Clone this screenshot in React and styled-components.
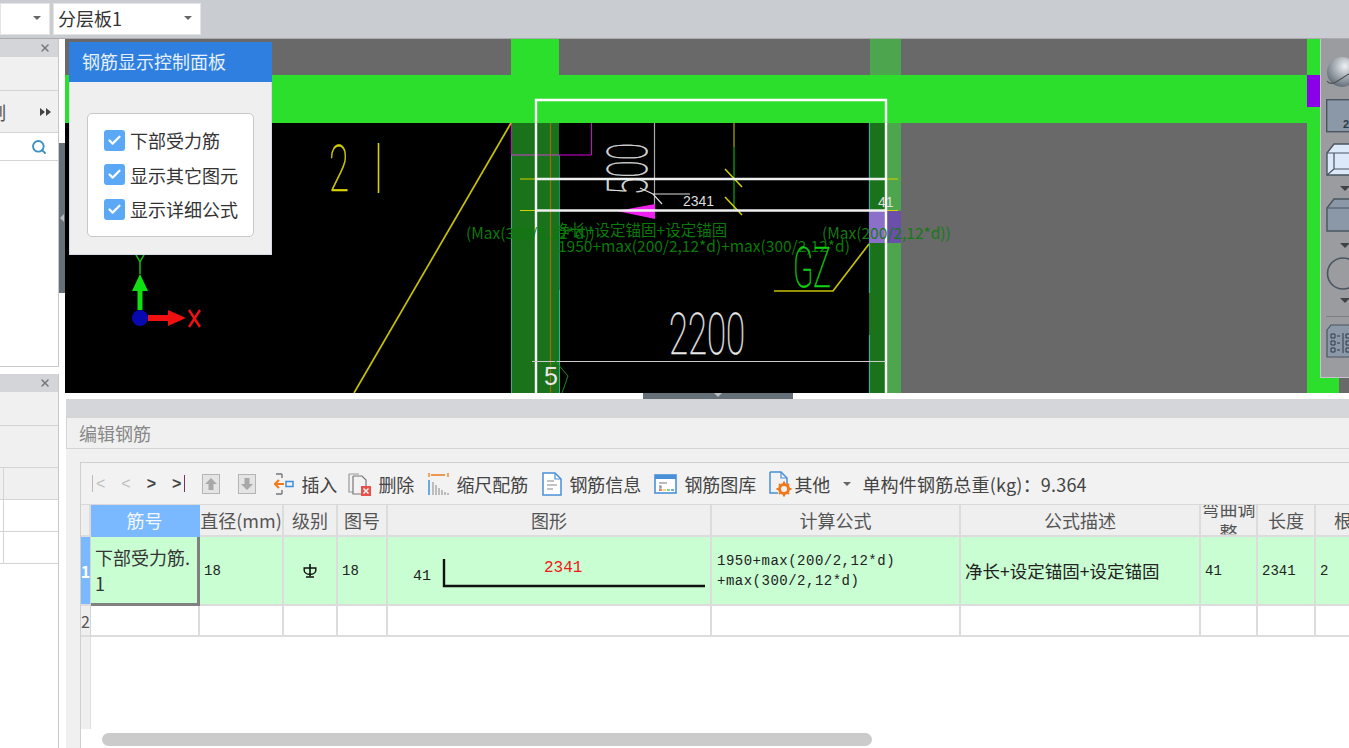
import React from 'react';
import styled, { createGlobalStyle } from 'styled-components';
import { Check, Search, X } from 'lucide-react';

const CJK = `"Noto Sans CJK SC", "Liberation Sans", sans-serif`;
const MONO = `"Liberation Mono", "Noto Sans CJK SC", monospace`;

const GlobalStyle = createGlobalStyle`
  html, body {
    margin: 0;
    padding: 0;
    overflow: hidden;
    background: #ffffff;
  }
  * { box-sizing: border-box; }
`;

const Page = styled.div`
  width: 1349px;
  height: 748px;
  display: flex;
  flex-direction: column;
  overflow: hidden;
  font-family: ${CJK};
  font-size: 18px;
  line-height: 24px;
  color: #333;
  filter: blur(0.4px);
`;

/* ---- top bar ---- */
const TopBar = styled.div`
  height: 39px;
  flex: none;
  display: flex;
  gap: 3px;
  padding-top: 3px;
  background: #c9ccd1;
  border-bottom: 1px solid #a9abae;
`;

const Select = styled.div`
  width: ${(p) => p.$w}px;
  height: 32px;
  display: flex;
  align-items: center;
  justify-content: space-between;
  padding: 0 8px 2px 4px;
  background: #fff;
  border: 1px solid #e4e4e4;
`;

const Caret = styled.span`
  width: 0;
  height: 0;
  flex: none;
  border-left: 4px solid transparent;
  border-right: 4px solid transparent;
  border-top: 4px solid ${(p) => p.$color || '#666'};
`;

const Main = styled.div`
  flex: 1;
  display: flex;
  min-height: 0;
`;

/* ---- left column ---- */
const LeftCol = styled.div`
  width: 59px;
  flex: none;
  display: flex;
  flex-direction: column;
  gap: 7px;
`;

const SidePanel = styled.div`
  height: ${(p) => (p.$grow ? 'auto' : `${p.$h}px`)};
  flex: ${(p) => (p.$grow ? 1 : 'none')};
  display: flex;
  flex-direction: column;
  background: #fff;
  border-right: 1px solid #c8c8c8;
  border-bottom: ${(p) => (p.$grow ? 'none' : '1px solid #c8c8c8')};
  overflow: hidden;
`;

const SideHeader = styled.div`
  height: 18px;
  flex: none;
  display: flex;
  align-items: center;
  justify-content: flex-end;
  padding-right: 7px;
  background: #d3d5d9;
  color: #777;
`;

const SideRow = styled.div`
  height: ${(p) => p.$h}px;
  flex: none;
  display: flex;
  align-items: center;
  justify-content: space-between;
  padding-right: ${(p) => p.$pr || 0}px;
  background: ${(p) => p.$bg || '#f0f0f0'};
  border-bottom: 1px solid #d4d4d4;
`;

const CutLabel = styled.span`
  margin-left: -12px;
  color: #555;
`;

const StubCell = styled.div`
  width: 4px;
  height: 100%;
  border-right: 1px solid #d4d4d4;
`;

const Splitter = styled.div`
  width: 6px;
  flex: none;
  display: flex;
  flex-direction: column;
  background: #fff;
`;

const SplitHandle = styled.div`
  margin-top: 104px;
  height: 150px;
  display: flex;
  align-items: center;
  justify-content: center;
  background: #667079;
`;

const SplitArrow = styled.span`
  width: 0;
  height: 0;
  border-top: 4px solid transparent;
  border-bottom: 4px solid transparent;
  border-right: 4px solid #b8bdc2;
`;

/* ---- right part ---- */
const Work = styled.div`
  flex: 1;
  min-width: 0;
  display: flex;
  flex-direction: column;
`;

const Canvas = styled.div`
  position: relative;
  height: 354px;
  flex: none;
  background: #000;
  overflow: hidden;
`;

const CadSvg = styled.svg`
  display: block;
`;

const ControlPanel = styled.div`
  position: absolute;
  left: 4px;
  top: 3px;
  width: 203px;
  height: 213px;
  display: flex;
  flex-direction: column;
  background: #efefef;
  border: 1px solid #d5dbe6;
  border-top: none;
`;

const ControlTitle = styled.div`
  height: 40px;
  flex: none;
  display: flex;
  align-items: center;
  padding: 0 0 2px 13px;
  margin: 0 -1px;
  background: #2e7fe0;
  color: #e6f0fb;
`;

const ControlBody = styled.div`
  margin: 31px 17px 0 17px;
  height: 124px;
  display: flex;
  flex-direction: column;
  gap: 12.5px;
  padding: 15px 0 0 16px;
  background: #fff;
  border: 1px solid #c8c8c8;
  border-radius: 5px;
`;

const CheckRow = styled.label`
  display: flex;
  align-items: center;
  gap: 5px;
  height: 22px;
  color: #333;
`;

const CheckBox = styled.span`
  width: 21px;
  height: 21px;
  flex: none;
  display: flex;
  align-items: center;
  justify-content: center;
  background: #5aa8f6;
  border-radius: 3px;
  color: #fff;
`;

const Rail = styled.div`
  position: absolute;
  right: 0;
  top: 0;
  width: 29px;
  height: 339px;
  display: flex;
  flex-direction: column;
  align-items: flex-start;
  padding: 18px 0 0 5px;
  background: #9a9c9f;
  border-left: 1px solid #c4c6c8;
  border-bottom: 1px solid #c4c6c8;
  overflow: hidden;
`;

const RailIcon = styled.svg`
  flex: none;
  display: block;
  margin-top: ${(p) => p.$mt || 0}px;
`;

const RailCaret = styled(Caret)`
  margin: ${(p) => p.$mt}px 0 0 14px;
  border-left-width: 5px;
  border-right-width: 5px;
  border-top-width: 5px;
`;

const RailLine = styled.div`
  width: 40px;
  height: 1px;
  margin-top: 13px;
  background: #7d7f82;
`;

const HandleRow = styled.div`
  height: 6px;
  flex: none;
  display: flex;
  justify-content: center;
  padding-left: 22px;
  background: #fff;
`;

const Handle = styled.div`
  width: 150px;
  height: 6px;
  display: flex;
  justify-content: center;
  background: #667079;
`;

const HandleArrow = styled(Caret)`
  border-top-color: #b8bdc2;
`;

/* ---- edit panel ---- */
const EditPanel = styled.div`
  flex: 1;
  min-height: 0;
  margin-left: 1px;
  display: flex;
  flex-direction: column;
  background: #f0f0f0;
`;

const EditHeader = styled.div`
  height: 18px;
  flex: none;
  background: #d4d6da;
`;

const EditTitle = styled.div`
  height: 32px;
  flex: none;
  display: flex;
  align-items: center;
  padding-left: 12px;
  color: #888;
  border: 1px solid #d4d4d4;
  border-right: none;
`;

const EditBox = styled.div`
  flex: 1;
  min-width: 0;
  margin: 13px 0 0 14px;
  display: flex;
  flex-direction: column;
  background: #fff;
  border: 1px solid #cfcfcf;
  border-right: none;
  border-bottom: none;
  position: relative;
  overflow: hidden;
`;

const Toolbar = styled.div`
  height: 42px;
  flex: none;
  display: flex;
  align-items: center;
  gap: 13px;
  padding: 1px 0 0 8px;
  background: #f2f2f2;
  border-bottom: 1px solid #d8d8d8;
  color: #444;
  white-space: nowrap;
`;

const NavGroup = styled.div`
  display: flex;
  align-items: center;
  gap: 16px;
  margin-right: 1px;
  font-family: "Liberation Sans", sans-serif;
  font-size: 16px;
  font-weight: 700;
`;

const NavBtn = styled.span`
  color: ${(p) => (p.$off ? '#bdbdbd' : '#444')};
  font-weight: ${(p) => (p.$off ? 400 : 700)};
`;

const NavBar = styled.i`
  display: inline-block;
  width: 1px;
  height: 17px;
  vertical-align: -3px;
  margin: 0 3px;
  background: ${(p) => (p.$off ? '#c4b4c4' : '#7a3060')};
`;

const ArrowBtn = styled.div`
  display: flex;
  margin-right: 5px;
`;

const ToolBtn = styled.div`
  display: flex;
  align-items: center;
  gap: ${(p) => (p.$gap === undefined ? 7 : p.$gap)}px;
  margin-right: ${(p) => p.$mr || 0}px;
`;

const Total = styled.span`
  margin-left: -2px;
  letter-spacing: 0.2px;
`;

const Grid = styled.div`
  display: grid;
  grid-template-columns: 10px 109px 84px 54px 50px 324px 249px 240px 57px 58px 74px;
  grid-auto-rows: min-content;
`;

const Cell = styled.div`
  height: ${(p) => p.$h}px;
  display: flex;
  align-items: center;
  justify-content: ${(p) => (p.$center ? 'center' : 'flex-start')};
  padding: 0 ${(p) => (p.$center ? 0 : 4)}px;
  background: ${(p) => p.$bg || '#fff'};
  border-right: 2px solid #dcdcdc;
  border-bottom: 2px solid #dcdcdc;
  overflow: hidden;
`;

const HeadCell = styled(Cell)`
  color: #555;
  background: #efefef;
  white-space: nowrap;
`;

const TightHead = styled.span`
  width: 54px;
  white-space: normal;
  text-align: center;
  line-height: 24px;
`;

const ActiveHead = styled(Cell)`
  background: #7ab8ff;
  color: #f4f9ff;
  border-color: #7ab8ff;
`;

const RowHead = styled(Cell)`
  padding: 0;
  background: ${(p) => (p.$on ? '#7ab8ff' : '#efefef')};
  color: ${(p) => (p.$on ? '#fff' : '#555')};
  border-right: 1px solid #d4d4d4;
  font-weight: ${(p) => (p.$on ? 700 : 400)};
  font-size: 16px;
  justify-content: center;
`;

const ActiveCell = styled(Cell)`
  padding: 0 0 0 4px;
  background: #c9fdd2;
  border-right: 3px solid #808080;
  border-bottom: 3px solid #808080;
  color: #333;
  line-height: 26px;
`;

const DataCell = styled(Cell)`
  background: #c9fdd2;
  font-family: ${MONO};
  font-size: 14px;
  color: #222;
`;

const ShapeCell = styled(DataCell)`
  padding: 0;
`;

const Formula = styled(DataCell)`
  line-height: 20px;
  letter-spacing: 0.5px;
  padding-left: 5px;
`;

const Desc = styled(Cell)`
  background: #c9fdd2;
  font-size: 17.5px;
  color: #222;
  white-space: nowrap;
`;

const ShapeSvg = styled.svg`
  display: block;
`;

const RowRail = styled.div`
  width: 10px;
  height: 92px;
  background: #efefef;
  border-right: 1px solid #e0e0e0;
`;

const ScrollTrack = styled.div`
  position: absolute;
  left: 21px;
  bottom: 2px;
  width: 770px;
  height: 13px;
  background: #cbcbcb;
  border-radius: 7px;
`;

const IconUp = ({ down }) => (
  <svg width="18" height="20" viewBox="0 0 18 20">
    <rect x="0.5" y="0.5" width="17" height="19" fill="#e4e4e4" stroke="#b5b5b5" />
    <path d={down ? 'M9 16l6-6h-3.5V4h-5v6H3z' : 'M9 4l6 6h-3.5v6h-5v-6H3z'} fill="#a8a8a8" />
  </svg>
);

const IconInsert = () => (
  <svg width="20" height="24" viewBox="0 0 20 24" fill="none">
    <path d="M2 2h6M8 2v4M2 22h6M8 22v-4" stroke="#777" strokeWidth="1.4" />
    <path d="M1 12h9M5 8l-4 4 4 4" stroke="#f07a1a" strokeWidth="2" />
    <rect x="12" y="9.5" width="7" height="5" stroke="#3d8fd8" strokeWidth="1.5" />
  </svg>
);

const IconDelete = () => (
  <svg width="23" height="24" viewBox="0 0 23 24" fill="none">
    <path d="M1 2h10M1 2v18h4" stroke="#999" strokeWidth="1.2" />
    <path d="M5 4h9l4 4v8M5 4v18h8" stroke="#777" strokeWidth="1.2" />
    <rect x="13" y="14" width="10" height="10" fill="#e8504a" />
    <path d="M15.5 16.5l5 5M20.5 16.5l-5 5" stroke="#fff" strokeWidth="1.4" />
  </svg>
);

const IconScale = () => (
  <svg width="21" height="22" viewBox="0 0 21 22" fill="none">
    <path d="M1 0v4M20 0v4M3 2h14" stroke="#f07a1a" strokeWidth="1.3" />
    <path d="M1 7v15" stroke="#3d8fd8" strokeWidth="1.5" />
    <path d="M5 9v13M8 12v10M11 15v7M14 17v5M17 19v3M20 20v2" stroke="#999" strokeWidth="1.2" />
  </svg>
);

const IconDoc = () => (
  <svg width="20" height="24" viewBox="0 0 20 24" fill="none">
    <path d="M1 1h12l6 6v16H1z" fill="#fff" stroke="#4a90d8" strokeWidth="1.5" />
    <path d="M13 1v6h6" stroke="#4a90d8" strokeWidth="1.2" />
    <path d="M5 9h7M5 13h10M5 17h6" stroke="#888" strokeWidth="1.2" />
  </svg>
);

const IconWindow = () => (
  <svg width="23" height="20" viewBox="0 0 23 20" fill="none">
    <rect x="1" y="1" width="21" height="18" fill="#fff" stroke="#4a90d8" strokeWidth="1.6" />
    <rect x="1" y="1" width="21" height="4" fill="#4a90d8" />
    <path d="M5 9h8M5 12h2v2H5" stroke="#777" strokeWidth="1.1" />
    <path d="M5 16h3" stroke="#e8504a" strokeWidth="1.5" />
    <path d="M9 16h3" stroke="#e8c84a" strokeWidth="1.5" />
    <path d="M13 16h3" stroke="#5ac85a" strokeWidth="1.5" />
    <path d="M17 16h3" stroke="#4a90d8" strokeWidth="1.5" />
  </svg>
);

const IconOther = () => (
  <svg width="23" height="26" viewBox="0 0 23 26" fill="none">
    <path d="M1 1h11l6 6v7M1 1v21h8" stroke="#4a90d8" strokeWidth="1.5" />
    <path d="M12 1v6h6" stroke="#4a90d8" strokeWidth="1.2" />
    <circle cx="15" cy="18" r="4.5" stroke="#f07a1a" strokeWidth="3" />
    <path d="M15 10.5v3M15 22.5v3M7.5 18h3M19.5 18h3M10 13l2 2M18 21l2 2M20 13l-2 2M12 21l-2 2" stroke="#f07a1a" strokeWidth="2" />
  </svg>
);

const Grade = () => (
  <svg width="14" height="14" viewBox="0 0 14 14" fill="none">
    <path d="M7 0v12.5" stroke="#111" strokeWidth="1.6" />
    <path d="M1.2 4v2.5a5.8 3.8 0 0 0 11.6 0V4z" stroke="#111" strokeWidth="1.4" />
    <path d="M3 13h8" stroke="#111" strokeWidth="1.5" />
  </svg>
);

const cadText = { fontFamily: 'Roboto, "Liberation Sans", sans-serif', fontWeight: 100, strokeWidth: 0.5 };
const noteText = { fontFamily: '"Noto Sans CJK SC", "Liberation Sans", sans-serif', fontSize: 15.5 };
const smallText = { fontFamily: '"Liberation Sans", sans-serif' };

function CadDrawing() {
  return (
    <CadSvg width="1284" height="354" viewBox="65 39 1284 354">
      <rect x="65" y="39" width="1284" height="354" fill="#696969" />
      <rect x="65" y="123" width="836" height="270" fill="#000" />
      <rect x="65" y="75" width="1243" height="48" fill="#2cdf2c" />
      <rect x="1307" y="39" width="32" height="354" fill="#2cdf2c" />
      <rect x="1307" y="75" width="13" height="32" fill="#8a00e8" />
      <rect x="511" y="39" width="48" height="36" fill="#2cdf2c" />
      <rect x="870" y="39" width="31" height="36" fill="#4da64d" />

      <rect x="511" y="123" width="48" height="270" fill="#1a731a" />
      <path d="M511.5 155V393M559.5 290V393" stroke="#22b8a0" strokeWidth="1" />
      <path d="M559.5 155V290" stroke="#158a70" strokeWidth="1" />
      <rect x="869" y="123" width="16" height="270" fill="#1a731a" />
      <rect x="885" y="123" width="16" height="270" fill="#4da64d" />
      <path d="M869.5 123V293M869.5 335V393" stroke="#22b8a0" strokeWidth="1.2" />
      <rect x="869" y="211" width="16" height="32" fill="#8a70c8" />
      <rect x="885" y="211" width="16" height="32" fill="#6a50a8" />

      <path d="M511.5 123V155H591.5V123" fill="none" stroke="#d800d8" strokeWidth="1" />
      <path d="M511 155H559" stroke="#777" strokeWidth="1" />
      <path d="M550.5 123V393" stroke="#a06a10" strokeWidth="1.2" />
      <path d="M511 123L354 393" stroke="#c8c000" strokeWidth="1.7" />

      <text x="329" y="191" fontSize="64" fill="#d8d000" stroke="#d8d000" textLength="20" lengthAdjust="spacingAndGlyphs" style={cadText}>2</text>
      <path d="M378.5 143V193" stroke="#d8d000" strokeWidth="1.6" />

      <path d="M654.5 123V210" stroke="#aaa" strokeWidth="1.2" />
      <text transform="translate(647 195) rotate(-90)" fontSize="56" fill="#ddd" stroke="#ddd" textLength="52" lengthAdjust="spacingAndGlyphs" style={cadText}>500</text>
      <path d="M640 188L653 194L662 204M653 194H690" fill="none" stroke="#ddd" strokeWidth="1.2" />

      <path d="M734 123V147" stroke="#8a8a00" strokeWidth="1.5" />
      <path d="M734 147V210" stroke="#0a8a0a" strokeWidth="1.5" />
      <path d="M725 169L742 187M725 197L742 215" stroke="#d8d000" strokeWidth="1.5" />

      <path d="M617 211L655 204V219Z" fill="#f020f0" />
      <path d="M520 179H898M520 210.5H898" stroke="#d8d000" strokeWidth="1.2" />
      <path d="M535 179H886M535 210.5H886" stroke="#f0f0f0" strokeWidth="2.4" />
      <path d="M536 393V100H886V393" fill="none" stroke="#fff" strokeWidth="2.4" />

      <text x="683" y="206" fontSize="14" fill="#ddd" style={smallText}>2341</text>
      <text x="878" y="207" fontSize="14" fill="#ddd" style={smallText}>41</text>

      <text x="466" y="239" fill="#0a7a0a" style={noteText}>(Max(300/2,12*d))</text>
      <text x="555" y="236" fill="#0a7a0a" style={noteText}>净长+设定锚固+设定锚固</text>
      <text x="558" y="252" fill="#0a7a0a" style={noteText}>1950+max(200/2,12*d)+max(300/2,12*d)</text>
      <text x="822" y="239" fill="#157a15" style={noteText}>(Max(200/2,12*d))</text>

      <text x="793" y="287" fontSize="55" fill="#10d010" stroke="#10d010" textLength="38" lengthAdjust="spacingAndGlyphs" style={cadText}>GZ</text>
      <path d="M774 291H833L869 244" fill="none" stroke="#c8c000" strokeWidth="1.7" />

      <text x="669" y="354" fontSize="57" fill="#e8e8e8" stroke="#e8e8e8" textLength="76" lengthAdjust="spacingAndGlyphs" style={cadText}>2200</text>
      <path d="M532 361.5H886" stroke="#ccc" strokeWidth="1.2" />
      <path d="M546 368L558 360M556 362L568 376L562 393" fill="none" stroke="#1a8a1a" strokeWidth="1" />
      <text x="544" y="385" fontSize="25" fill="#e8e8e8" style={smallText}>5</text>

      <path d="M140 310V283" stroke="#10e010" strokeWidth="5" />
      <path d="M140 274L148 291H132Z" fill="#10e010" />
      <path d="M134 251L140 262L146 251M140 262V274" fill="none" stroke="#10c010" strokeWidth="1.5" />
      <path d="M148 318H174" stroke="#f01010" strokeWidth="6" />
      <path d="M186 318L168 310V326Z" fill="#f01010" />
      <circle cx="140" cy="318" r="8" fill="#0808b0" />
      <path d="M189 310L200 327M200 310L189 327" stroke="#f01010" strokeWidth="2.4" />
    </CadSvg>
  );
}

function ToolRail() {
  return (
    <Rail>
      <RailIcon width="40" height="30" viewBox="0 0 40 30">
        <defs>
          <radialGradient id="ball" cx="0.6" cy="0.3" r="0.75">
            <stop offset="0" stopColor="#eef1f4" />
            <stop offset="1" stopColor="#5c6672" />
          </radialGradient>
        </defs>
        <circle cx="16" cy="15" r="15" fill="url(#ball)" />
        <path d="M1 24C3 27 6 27 10 25L34 10" fill="none" stroke="#4a4f55" strokeWidth="1.2" />
      </RailIcon>
      <RailIcon $mt={12} width="40" height="34" viewBox="0 0 40 34">
        <rect x="0.7" y="0.7" width="38" height="32" fill="#8b98a8" stroke="#4a5560" strokeWidth="1.4" />
        <text x="17" y="29" fontSize="11" fill="#2e3a46" fontWeight="700" style={smallText}>2</text>
      </RailIcon>
      <RailIcon $mt={10} width="40" height="33" viewBox="0 0 40 33">
        <path d="M1 10L8 1H40V32H1Z" fill="#dbe9fb" stroke="#4a5560" strokeWidth="1.4" />
        <path d="M1 10H40M8 10V26H40M8 26L1 32" fill="none" stroke="#4a5560" strokeWidth="1.2" />
      </RailIcon>
      <RailCaret $mt={10} $color="#3e4348" />
      <RailIcon $mt={7} width="40" height="34" viewBox="0 0 40 34">
        <path d="M1 10L8 1H40V33H1Z" fill="#8b98a8" stroke="#4a5560" strokeWidth="1.4" />
        <path d="M1 10H40" stroke="#4a5560" strokeWidth="1.2" />
      </RailIcon>
      <RailCaret $mt={11} $color="#3e4348" />
      <RailIcon $mt={9} width="40" height="33" viewBox="0 0 40 33">
        <circle cx="17" cy="16.5" r="15.5" fill="none" stroke="#4a5560" strokeWidth="1.6" />
      </RailIcon>
      <RailCaret $mt={8} $color="#3e4348" />
      <RailLine />
      <RailIcon $mt={7} width="40" height="34" viewBox="0 0 40 34">
        <path d="M1 6L5 1H40V33H1Z" fill="#8b98a8" stroke="#4a5560" strokeWidth="1.2" />
        <path d="M5 10h4v4H5zM5 17h4v4H5zM5 24h4v4H5zM20 10h4v4h-4zM20 17h4v4h-4zM20 24h4v4h-4z" fill="none" stroke="#2e3a46" strokeWidth="1" />
        <path d="M11 12h3M11 19h3M11 26h3M17 9v20" stroke="#2e3a46" strokeWidth="1" />
      </RailIcon>
    </Rail>
  );
}

function RowShape() {
  return (
    <ShapeSvg width="322" height="67" viewBox="0 0 322 67">
      <text x="25" y="43" fontSize="15" fill="#222" style={{ fontFamily: '"Liberation Mono", monospace' }}>41</text>
      <path d="M56 22V49H317" fill="none" stroke="#111" strokeWidth="2.4" />
      <text x="156" y="35" fontSize="16" fill="#f01818" style={{ fontFamily: '"Liberation Mono", monospace' }}>2341</text>
    </ShapeSvg>
  );
}

const options = ['下部受力筋', '显示其它图元', '显示详细公式'];
const headers = ['直径(mm)', '级别', '图号', '图形', '计算公式', '公式描述'];

export default function App() {
  return (
    <Page>
      <GlobalStyle />
      <TopBar>
        <Select $w={50}><span /><Caret /></Select>
        <Select $w={148}>分层板1<Caret /></Select>
      </TopBar>
      <Main>
        <LeftCol>
          <SidePanel $h={328}>
            <SideHeader><X size={12} strokeWidth={3} /></SideHeader>
            <SideRow $h={34} />
            <SideRow $h={42} $pr={6}>
              <CutLabel>制</CutLabel>
              <svg width="12" height="8" viewBox="0 0 12 8">
                <path d="M0 0l5 4-5 4zM6 0l5 4-5 4z" fill="#444" />
              </svg>
            </SideRow>
            <SideRow $h={28} $bg="#fff" $pr={11}>
              <span />
              <Search size={16} strokeWidth={2.8} color="#3a90c0" />
            </SideRow>
          </SidePanel>
          <SidePanel $grow>
            <SideHeader><X size={12} strokeWidth={3} /></SideHeader>
            <SideRow $h={34} />
            <SideRow $h={42} />
            <SideRow $h={32}><StubCell /></SideRow>
            <SideRow $h={32} $bg="#fff"><StubCell /></SideRow>
            <SideRow $h={32} $bg="#fff"><StubCell /></SideRow>
          </SidePanel>
        </LeftCol>
        <Splitter>
          <SplitHandle><SplitArrow /></SplitHandle>
        </Splitter>
        <Work>
          <Canvas>
            <CadDrawing />
            <ControlPanel>
              <ControlTitle>钢筋显示控制面板</ControlTitle>
              <ControlBody>
                {options.map((o) => (
                  <CheckRow key={o}>
                    <CheckBox><Check size={15} strokeWidth={3.5} /></CheckBox>
                    {o}
                  </CheckRow>
                ))}
              </ControlBody>
            </ControlPanel>
            <ToolRail />
          </Canvas>
          <HandleRow>
            <Handle><HandleArrow /></Handle>
          </HandleRow>
          <EditPanel>
            <EditHeader />
            <EditTitle>编辑钢筋</EditTitle>
            <EditBox>
              <Toolbar>
                <NavGroup>
                  <NavBtn $off><NavBar $off />&lt;</NavBtn>
                  <NavBtn $off>&lt;</NavBtn>
                  <NavBtn>&gt;</NavBtn>
                  <NavBtn>&gt;<NavBar /></NavBtn>
                </NavGroup>
                <ArrowBtn><IconUp /></ArrowBtn>
                <ArrowBtn><IconUp down /></ArrowBtn>
                <ToolBtn $mr={-2}><IconInsert />插入</ToolBtn>
                <ToolBtn $mr={1}><IconDelete />删除</ToolBtn>
                <ToolBtn $mr={1}><IconScale />缩尺配筋</ToolBtn>
                <ToolBtn><IconDoc />钢筋信息</ToolBtn>
                <ToolBtn><IconWindow />钢筋图库</ToolBtn>
                <ToolBtn $gap={2}><IconOther />其他</ToolBtn>
                <Caret />
                <Total>单构件钢筋总重(kg)：9.364</Total>
              </Toolbar>
              <Grid>
                <HeadCell $h={32} />
                <ActiveHead $h={32} $center>筋号</ActiveHead>
                {headers.map((h) => (
                  <HeadCell key={h} $h={32} $center>{h}</HeadCell>
                ))}
                <HeadCell $h={32} $center><TightHead>弯曲调整</TightHead></HeadCell>
                <HeadCell $h={32} $center>长度</HeadCell>
                <HeadCell $h={32} $center>根数</HeadCell>

                <RowHead $h={69} $on>1</RowHead>
                <ActiveCell $h={69}>下部受力筋.<br />1</ActiveCell>
                <DataCell $h={69}>18</DataCell>
                <DataCell $h={69} $center><Grade /></DataCell>
                <DataCell $h={69}>18</DataCell>
                <ShapeCell $h={69}><RowShape /></ShapeCell>
                <Formula $h={69}>1950+max(200/2,12*d)<br />+max(300/2,12*d)</Formula>
                <Desc $h={69}>净长+设定锚固+设定锚固</Desc>
                <DataCell $h={69}>41</DataCell>
                <DataCell $h={69}>2341</DataCell>
                <DataCell $h={69}>2</DataCell>

                <RowHead $h={31}>2</RowHead>
                {Array.from({ length: 10 }, (_, i) => (
                  <Cell key={i} $h={31} />
                ))}
              </Grid>
              <RowRail />
              <ScrollTrack />
            </EditBox>
          </EditPanel>
        </Work>
      </Main>
    </Page>
  );
}
